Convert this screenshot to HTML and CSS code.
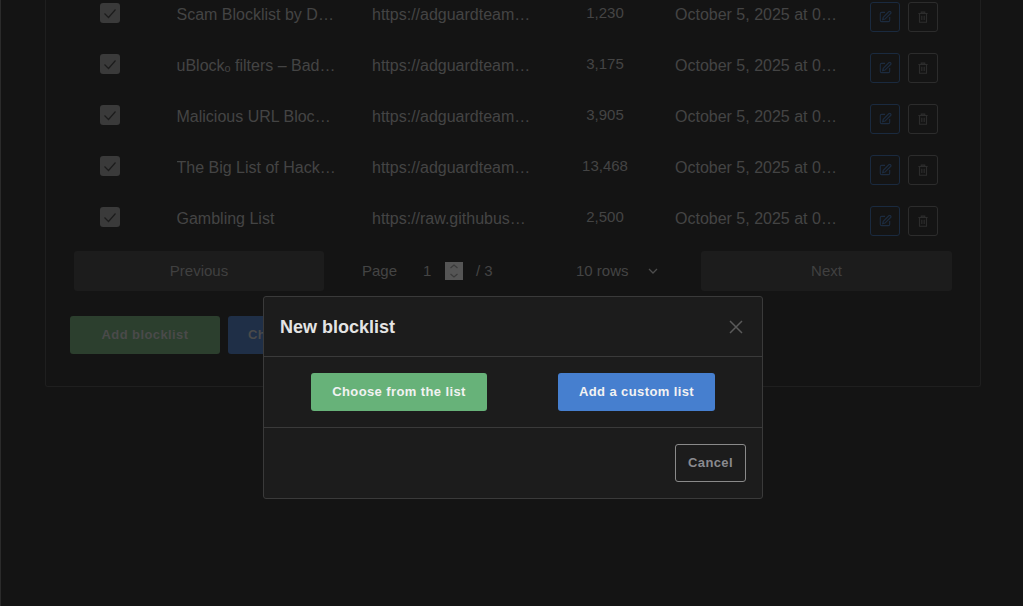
FILE: index.html
```html
<!DOCTYPE html>
<html lang="en">
<head>
<meta charset="utf-8">
<title>Blocklists</title>
<link rel="stylesheet" href="styles.css">
</head>
<body>
<main class="page">
  <section class="card">
    <div class="table">
      <div class="row">
        <span class="check"><svg viewBox="0 0 20 20"><path d="M4.500 10.500l4 4 7-8"/></svg></span>
        <span class="name">Scam Blocklist by DurableNapkin</span>
        <span class="url">https://adguardteam.github.io/list</span>
        <span class="num">1,230</span>
        <span class="date">October 5, 2025 at 04:12</span>
        <span class="actions">
          <span class="act act-edit"><svg viewBox="0 0 24 24"><path d="M12 4H6a2 2 0 0 0-2 2v12a2 2 0 0 0 2 2h12a2 2 0 0 0 2-2v-6"/><path d="M18.500 3a2.100 2.100 0 0 1 3 3L12 15.500l-4 1 1-4z"/></svg></span>
          <span class="act"><svg viewBox="0 0 24 24"><path d="M4 6h16M9 6V3.500h6V6M6 6v15h12V6M10 10v7M14 10v7"/></svg></span>
        </span>
      </div>
      <div class="row">
        <span class="check"><svg viewBox="0 0 20 20"><path d="M4.500 10.500l4 4 7-8"/></svg></span>
        <span class="name">uBlockₒ filters – Badware risks list</span>
        <span class="url">https://adguardteam.github.io/list</span>
        <span class="num">3,175</span>
        <span class="date">October 5, 2025 at 04:12</span>
        <span class="actions">
          <span class="act act-edit"><svg viewBox="0 0 24 24"><path d="M12 4H6a2 2 0 0 0-2 2v12a2 2 0 0 0 2 2h12a2 2 0 0 0 2-2v-6"/><path d="M18.500 3a2.100 2.100 0 0 1 3 3L12 15.500l-4 1 1-4z"/></svg></span>
          <span class="act"><svg viewBox="0 0 24 24"><path d="M4 6h16M9 6V3.500h6V6M6 6v15h12V6M10 10v7M14 10v7"/></svg></span>
        </span>
      </div>
      <div class="row">
        <span class="check"><svg viewBox="0 0 20 20"><path d="M4.500 10.500l4 4 7-8"/></svg></span>
        <span class="name">Malicious URL Blocklist long</span>
        <span class="url">https://adguardteam.github.io/list</span>
        <span class="num">3,905</span>
        <span class="date">October 5, 2025 at 04:12</span>
        <span class="actions">
          <span class="act act-edit"><svg viewBox="0 0 24 24"><path d="M12 4H6a2 2 0 0 0-2 2v12a2 2 0 0 0 2 2h12a2 2 0 0 0 2-2v-6"/><path d="M18.500 3a2.100 2.100 0 0 1 3 3L12 15.500l-4 1 1-4z"/></svg></span>
          <span class="act"><svg viewBox="0 0 24 24"><path d="M4 6h16M9 6V3.500h6V6M6 6v15h12V6M10 10v7M14 10v7"/></svg></span>
        </span>
      </div>
      <div class="row">
        <span class="check"><svg viewBox="0 0 20 20"><path d="M4.500 10.500l4 4 7-8"/></svg></span>
        <span class="name">The Big List of Hacked Malware Sites</span>
        <span class="url">https://adguardteam.github.io/list</span>
        <span class="num">13,468</span>
        <span class="date">October 5, 2025 at 04:12</span>
        <span class="actions">
          <span class="act act-edit"><svg viewBox="0 0 24 24"><path d="M12 4H6a2 2 0 0 0-2 2v12a2 2 0 0 0 2 2h12a2 2 0 0 0 2-2v-6"/><path d="M18.500 3a2.100 2.100 0 0 1 3 3L12 15.500l-4 1 1-4z"/></svg></span>
          <span class="act"><svg viewBox="0 0 24 24"><path d="M4 6h16M9 6V3.500h6V6M6 6v15h12V6M10 10v7M14 10v7"/></svg></span>
        </span>
      </div>
      <div class="row">
        <span class="check"><svg viewBox="0 0 20 20"><path d="M4.500 10.500l4 4 7-8"/></svg></span>
        <span class="name">Gambling List</span>
        <span class="url">https://raw.githubusercontent.com/list</span>
        <span class="num">2,500</span>
        <span class="date">October 5, 2025 at 04:12</span>
        <span class="actions">
          <span class="act act-edit"><svg viewBox="0 0 24 24"><path d="M12 4H6a2 2 0 0 0-2 2v12a2 2 0 0 0 2 2h12a2 2 0 0 0 2-2v-6"/><path d="M18.500 3a2.100 2.100 0 0 1 3 3L12 15.500l-4 1 1-4z"/></svg></span>
          <span class="act"><svg viewBox="0 0 24 24"><path d="M4 6h16M9 6V3.500h6V6M6 6v15h12V6M10 10v7M14 10v7"/></svg></span>
        </span>
      </div>
    </div>

    <nav class="pager">
      <span class="pager-btn">Previous</span>
      <div class="pager-mid">
        <span class="pager-page">Page</span>
        <span class="pager-input">1</span>
        <span class="spin"><svg viewBox="0 0 18 18"><path d="M5.500 6L9 3l3.500 3M5.500 12L9 15l3.500-3"/></svg></span>
        <span class="pager-total">/ 3</span>
        <span class="pager-rows">10 rows</span>
        <svg class="chev" viewBox="0 0 12 12"><path d="M2 4l4 4 4-4"/></svg>
      </div>
      <span class="pager-btn pager-btn-next">Next</span>
    </nav>

    <div class="card-actions">
      <span class="btn-dim btn-dim-green">Add blocklist</span>
      <span class="btn-dim btn-dim-blue">Check for updates</span>
    </div>
  </section>
</main>

<div class="modal" role="dialog">
  <header class="modal-head">
    <h2 class="modal-title">New blocklist</h2>
    <svg class="close" viewBox="0 0 14 14"><path d="M1 1l12 12M13 1L1 13"/></svg>
  </header>
  <div class="modal-body">
    <button class="btn btn-green">Choose from the list</button>
    <button class="btn btn-blue">Add a custom list</button>
  </div>
  <footer class="modal-foot">
    <button class="btn btn-cancel">Cancel</button>
  </footer>
</div>
</body>
</html>
```

FILE: styles.css
```css
* { box-sizing: border-box; }
html, body { margin: 0; height: 100%; overflow: hidden; }
body {
  background: #141414;
  font-family: "Liberation Sans", Arial, sans-serif;
  color: #4a4a4a;
}
.page {
  height: 606px;
  padding: 0 42px 0 44px;
  border-left: 1px solid #2b2b2b;
}
.card {
  display: flow-root;
  height: 387px;
  border: 1px solid #1f1f1f;
  border-top: 0;
  border-radius: 0 0 3px 3px;
  padding: 0 24px;
}
.table { margin: -11px 4px 0 4px; }
.row {
  display: grid;
  grid-template-columns: 102.500px 195.500px 183px 100px 215px 82px;
  align-items: center;
  height: 51px;
  font-size: 16px;
}
.check {
  width: 20px;
  height: 20px;
  margin-left: 26px;
  background: #3a3a3a;
  border-radius: 3px;
  position: relative;
  top: -2px;
}
.check svg { display: block; width: 20px; height: 20px; fill: none; stroke: #1c1c1c; stroke-width: 1.200; }
.name, .url, .date {
  white-space: nowrap;
  overflow: hidden;
  text-overflow: ellipsis;
  color: #444;
}
.name { width: 160px; }
.url { width: 159px; }
.date { width: 163px; margin-left: 20px; }
.num { text-align: center; font-size: 15px; position: relative; top: -2px; color: #444; }
.actions { display: flex; gap: 8px; position: relative; top: 2px; }
.act {
  width: 30px;
  height: 30px;
  border: 1px solid #2c2c2c;
  border-radius: 3px;
  display: flex;
  align-items: center;
  justify-content: center;
  flex: none;
}
.act svg { width: 14px; height: 14px; fill: none; stroke: #2c2c2c; stroke-width: 2; }
.act-edit { border-color: #1a2a3f; }
.act-edit svg { stroke: #1c2b3f; }
.pager {
  display: flex;
  align-items: center;
  margin: 7px 4px 0 4px;
  height: 40px;
  width: 878px;
  font-size: 15px;
}
.pager-btn {
  width: 250px;
  height: 40px;
  flex: none;
  padding-bottom: 2px;
  background: #1c1c1c;
  border-radius: 3px;
  display: flex;
  align-items: center;
  justify-content: center;
  color: #404040;
}
.pager-btn-next { width: 251px; }
.pager-mid { display: flex; align-items: center; flex: 1; padding: 0 0 2px 38px; color: #444; }
.pager-page { width: 61px; }
.pager-input { width: 22px; }
.spin { width: 18px; height: 18px; margin-top: 2px; background: #555; flex: none; }
.spin svg { display: block; width: 18px; height: 18px; fill: none; stroke: #3a3a3a; stroke-width: 1.200; }
.pager-total { margin-left: 13px; width: 100px; }
.pager-rows { width: 71px; }
.chev { width: 12px; height: 12px; margin-top: 2px; fill: none; stroke: #4d4d4d; stroke-width: 1.300; }
.card-actions { display: flex; gap: 8px; margin-top: 25px; }
.btn-dim {
  height: 38px;
  padding-bottom: 2px;
  display: flex;
  align-items: center;
  justify-content: center;
  border-radius: 3px;
  font-size: 13px;
  font-weight: 700;
  letter-spacing: .4px;
  color: #4a4a4a;
  white-space: nowrap;
}
.btn-dim-green { width: 150px; background: #2c3f2e; }
.btn-dim-blue { width: 160px; background: #1f2f47; }
.modal {
  position: absolute;
  left: 263px;
  top: 296px;
  width: 500px;
  height: 203px;
  background: #1c1c1c;
  border: 1px solid #3a3a3a;
  border-radius: 3px;
  display: flex;
  flex-direction: column;
}
.modal-head {
  height: 60px;
  flex: none;
  display: flex;
  align-items: center;
  justify-content: space-between;
  padding: 1px 19px 0 16px;
  border-bottom: 1px solid #3a3a3a;
}
.modal-title { margin: 0; font-size: 18px; font-weight: 700; color: #e4e4e4; }
.close { width: 14px; height: 14px; margin-top: -1px; fill: none; stroke: #5a5a5a; stroke-width: 1.500; }
.modal-body {
  height: 71px;
  flex: none;
  padding: 0 47px;
  display: flex;
  align-items: center;
  border-bottom: 1px solid #3a3a3a;
  gap: 71px;
}
.modal-foot { flex: 1; display: flex; align-items: center; justify-content: flex-end; padding: 0 16px; }
.btn {
  height: 38px;
  border: 0;
  border-radius: 3px;
  font-family: inherit;
  font-size: 13px;
  font-weight: 700;
  letter-spacing: .4px;
  color: #f2f2f2;
  padding: 0 0 2px;
}
.btn-green { width: 176px; background: #67b279; }
.btn-blue { width: 157px; background: #467fcf; }
.btn-cancel { width: 71px; background: transparent; border: 1px solid #8a8a8a; color: #8a8a8f; }
```
